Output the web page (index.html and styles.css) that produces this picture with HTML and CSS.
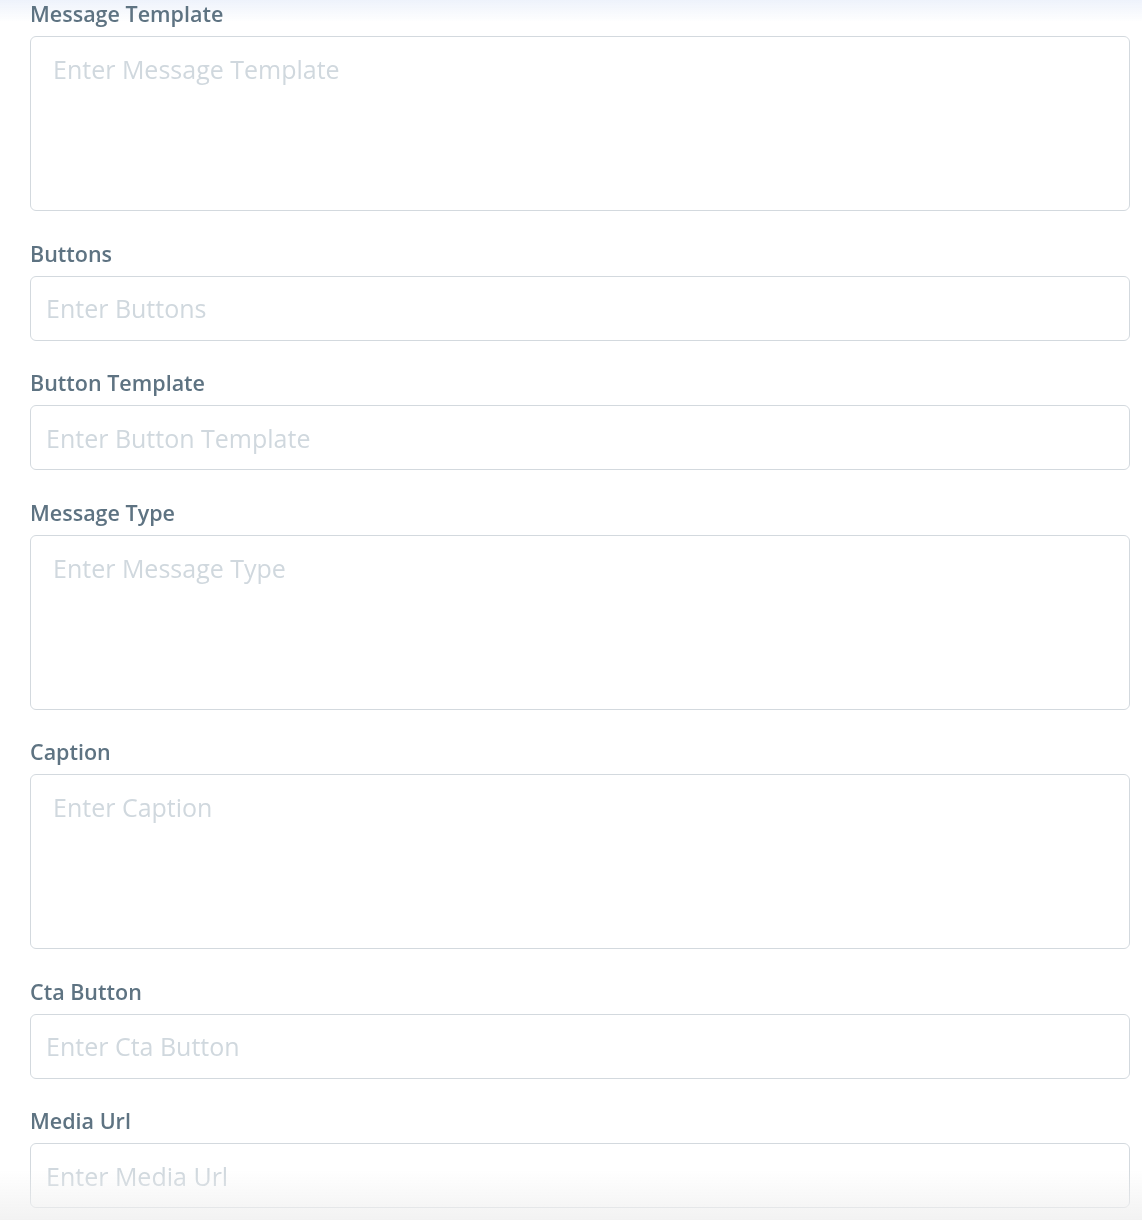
FILE: index.html
```html
<!DOCTYPE html>
<html lang="en">
<head>
  <meta charset="UTF-8" />
  <meta name="viewport" content="width=device-width, initial-scale=1.0" />
  <title>Message Template</title>
  <link rel="stylesheet" href="styles.css">
</head>
<body>
  <div class="top-shade"></div>

  <form class="form">
    <div class="field">
      <label for="messageTemplate">Message Template</label>
      <textarea id="messageTemplate" placeholder="Enter Message Template"></textarea>
    </div>

    <div class="field">
      <label for="buttons">Buttons</label>
      <input id="buttons" type="text" placeholder="Enter Buttons" />
    </div>

    <div class="field">
      <label for="buttonTemplate">Button Template</label>
      <input id="buttonTemplate" type="text" placeholder="Enter Button Template" />
    </div>

    <div class="field">
      <label for="messageType">Message Type</label>
      <textarea id="messageType" placeholder="Enter Message Type"></textarea>
    </div>

    <div class="field">
      <label for="caption">Caption</label>
      <textarea id="caption" placeholder="Enter Caption"></textarea>
    </div>

    <div class="field">
      <label for="ctaButton">Cta Button</label>
      <input id="ctaButton" type="text" placeholder="Enter Cta Button" />
    </div>

    <div class="field">
      <label for="mediaUrl">Media Url</label>
      <input id="mediaUrl" type="text" placeholder="Enter Media Url" />
    </div>
  </form>

  <div class="bottom-shade"></div>
</body>
</html>
```

FILE: styles.css
```css
body {
  margin: 0;
  padding: 0;
  font-family: "Open Sans", Arial, sans-serif;
  background: #fff;
  color: #5e7382;
}

.form {
  position: relative;
  z-index: 1;
  display: flex;
  flex-direction: column;
  padding: 0 12px 0 30px;
}

.field {
  display: flex;
  flex-direction: column;
  margin-bottom: 28.5px;
}

.field label {
  font-size: 21.5px;
  font-weight: 600;
  line-height: 28px;
  margin-bottom: 8px;
  color: #5e7382;
}

.field input,
.field textarea {
  box-sizing: border-box;
  width: 100%;
  margin: 0;
  border: 1px solid #d3d9de;
  border-radius: 6px;
  background: transparent;
  font-family: inherit;
  font-size: 25px;
  color: #5e7382;
  outline: none;
}

.field input {
  height: 65px;
  padding: 0 15px;
}

.field textarea {
  height: 175px;
  padding: 15px 22px;
  resize: none;
  line-height: 34px;
}

.field input::placeholder,
.field textarea::placeholder {
  color: #d0d8de;
}

/* soft shading of the scroll area edges */
.top-shade {
  position: fixed;
  top: 0;
  left: 0;
  right: 0;
  height: 22px;
  background: linear-gradient(180deg, rgba(236, 241, 251, 0.9), rgba(255, 255, 255, 0));
  pointer-events: none;
}

.bottom-shade {
  position: fixed;
  z-index: 2;
  bottom: 0;
  left: 0;
  right: 0;
  height: 50px;
  background: linear-gradient(180deg, rgba(240, 240, 240, 0), rgba(240, 240, 240, 0.85));
  pointer-events: none;
}
```
